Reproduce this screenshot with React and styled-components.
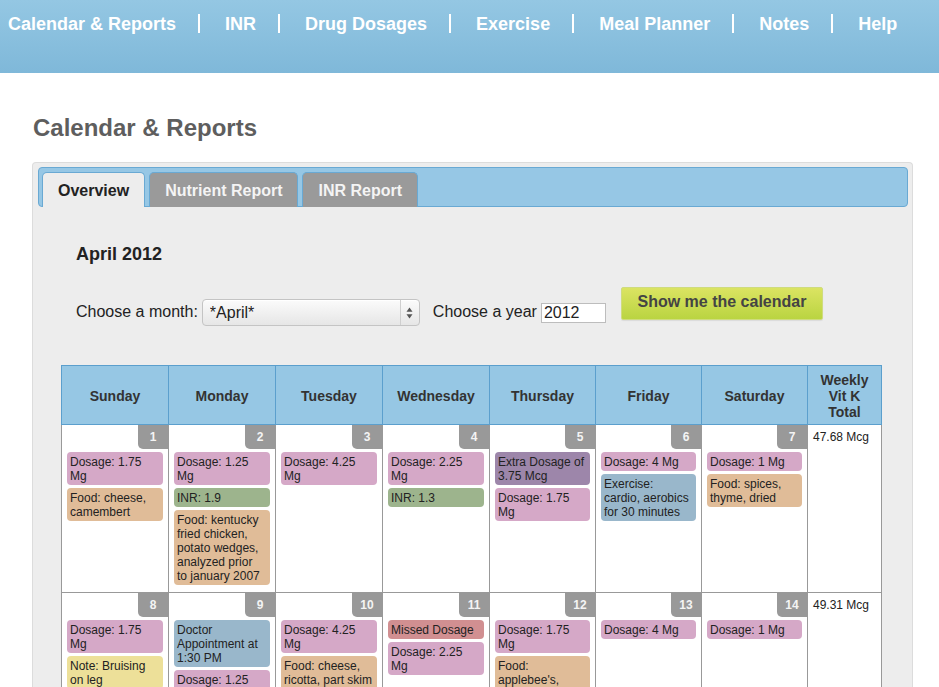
import styled, { createGlobalStyle } from "styled-components";

const GlobalStyle = createGlobalStyle`
    body {
        margin: 0;
        background: #fff;
        font-family: "Liberation Sans", Arial, Helvetica, sans-serif;
        color: #222;
    }
`

const Header = styled.header`
    height: 73px;
    background: linear-gradient(#94c7e3, #7fb8d9);
    display: flex;
    align-items: flex-start;
    padding: 14px 0 0 8px;
    box-sizing: border-box;
`
const NavLink = styled.a`
    font-size: 18px;
    line-height: 20px;
    font-weight: bold;
    color: #fff;
    text-decoration: none;
    white-space: nowrap;
`
const NavSep = styled.span`
    width: 2px;
    height: 19px;
    margin: 0 25px 0 22px;
    background: #fff;
`

const Main = styled.main`
    padding: 0 26px 0 32px;
`
const Title = styled.h1`
    margin: 41px 0 20px 1px;
    font-size: 24px;
    line-height: 28px;
    font-weight: bold;
    color: #5e5e5e;
`
const Panel = styled.div`
    width: 881px;
    box-sizing: border-box;
    background: #ededed;
    border: 1px solid #dcdcdc;
    border-bottom: none;
    border-radius: 4px 4px 0 0;
    padding: 4px 4px 0 5px;
`
const TabBar = styled.div`
    height: 40px;
    box-sizing: border-box;
    background: #96c7e5;
    border: 1px solid #69a9d3;
    border-radius: 4px;
    display: flex;
    align-items: flex-end;
    gap: 4px;
    padding: 0 3px;
`
const Tab = styled.div`
    height: 35px;
    margin-bottom: -1px;
    box-sizing: border-box;
    padding: 9px 15px 0 15px;
    font-size: 16px;
    line-height: 18px;
    font-weight: bold;
    border: 1px solid #69a9d3;
    border-bottom: none;
    border-radius: 5px 5px 0 0;
    background: ${p => (p.$active ? "#ededed" : "#9a9a9a")};
    color: ${p => (p.$active ? "#222" : "#f4f4f4")};
`
const Content = styled.div`
    padding: 36px 0 40px 23px;
`
const FormArea = styled.div`
    padding-left: 15px;
`
const Month = styled.h2`
    margin: 0 0 22px 0;
    font-size: 18px;
    line-height: 22px;
    font-weight: bold;
    color: #222;
`
const FormRow = styled.div`
    display: flex;
    align-items: flex-start;
    font-size: 16px;
    line-height: 20px;
    color: #222;
`
const Label = styled.label`
    margin-top: 15px;
    margin-right: 4px;
    white-space: nowrap;
`
const SelectBox = styled.div`
    margin-top: 12px;
    margin-right: 13px;
    width: 218px;
    height: 27px;
    box-sizing: border-box;
    display: flex;
    border: 1px solid #c4c4c4;
    border-radius: 4px;
    background: linear-gradient(#fbfbfb, #e6e6e6);
    box-shadow: inset 0 1px 0 #fff;
`
const Select = styled.select`
    flex: 1;
    appearance: none;
    border: none;
    background: transparent;
    font-family: "Liberation Sans", Arial, sans-serif;
    font-size: 16px;
    color: #222;
    padding: 0 0 0 7px;
    outline: none;
`
const Arrows = styled.div`
    width: 18px;
    border-left: 1px solid #cfcfcf;
    display: flex;
    align-items: center;
    justify-content: center;
`
const YearInput = styled.input`
    margin-top: 16px;
    width: 65px;
    height: 20px;
    box-sizing: border-box;
    border: 1px solid #bdbdbd;
    padding: 0 2px;
    font-family: "Liberation Sans", Arial, sans-serif;
    font-size: 16px;
    color: #222;
    background: #fff;
`
const ShowButton = styled.button`
    margin-left: 15px;
    width: 202px;
    height: 33px;
    padding: 0 0 3px;
    border: 1px solid #cfdc7e;
    border-radius: 2px;
    background: linear-gradient(#dbe462, #bad441);
    font-family: "Liberation Sans", Arial, sans-serif;
    font-size: 16px;
    font-weight: bold;
    color: #444;
    box-shadow: 0 1px 1px rgba(0,0,0,0.08);
`

const Table = styled.table`
    margin-top: 39px;
    width: 820px;
    table-layout: fixed;
    border-collapse: collapse;
`
const HeadCell = styled.th`
    background: #96c7e4;
    border: 1px solid #5b9fcd;
    padding: 6px 4px 4px;
    font-size: 14px;
    line-height: 16px;
    font-weight: bold;
    color: #333;
    height: 48px;
`
const DayCell = styled.td`
    border: 1px solid #999;
    background: #fff;
    padding: 0;
    vertical-align: top;
`
const TotalCell = styled.td`
    border: 1px solid #999;
    background: #fff;
    padding: 5px 5px;
    vertical-align: top;
    font-size: 12px;
    line-height: 14px;
    color: #222;
`
const BadgeRow = styled.div`
    display: flex;
    justify-content: flex-end;
`
const Badge = styled.div`
    width: 30px;
    height: 24px;
    background: #999;
    border-bottom-left-radius: 5px;
    color: #f4f4f4;
    font-size: 12px;
    font-weight: bold;
    line-height: 24px;
    text-align: center;
`
const Events = styled.div`
    display: flex;
    flex-direction: column;
    gap: 3px;
    padding: 3px 5px 7px 5px;
`
const kindColors = {
    dose: "#d5a8c7",
    food: "#e0bc98",
    inr: "#9db48d",
    extra: "#9d86aa",
    exercise: "#99b7cb",
    missed: "#d18f91",
    note: "#ede099",
}
const Event = styled.div`
    background: ${p => kindColors[p.$kind]};
    border-radius: 4px;
    padding: 3px 4.6px 2px 3px;
    font-size: 12px;
    line-height: 14px;
    color: #222;
`

const navItems = ["Calendar & Reports", "INR", "Drug Dosages", "Exercise", "Meal Planner", "Notes", "Help"]
const days = ["Sunday", "Monday", "Tuesday", "Wednesday", "Thursday", "Friday", "Saturday"]
const colWidths = [107, 107, 107, 107, 106, 106, 106, 74]

const weeks = [
    {
        total: "47.68 Mcg",
        days: [
            { n: 1, ev: [["dose", "Dosage: 1.75 Mg"], ["food", "Food: cheese, camembert"]] },
            { n: 2, ev: [["dose", "Dosage: 1.25 Mg"], ["inr", "INR: 1.9"], ["food", "Food: kentucky fried chicken, potato wedges, analyzed prior to january 2007"]] },
            { n: 3, ev: [["dose", "Dosage: 4.25 Mg"]] },
            { n: 4, ev: [["dose", "Dosage: 2.25 Mg"], ["inr", "INR: 1.3"]] },
            { n: 5, ev: [["extra", "Extra Dosage of 3.75 Mcg"], ["dose", "Dosage: 1.75 Mg"]] },
            { n: 6, ev: [["dose", "Dosage: 4 Mg"], ["exercise", "Exercise: cardio, aerobics for 30 minutes"]] },
            { n: 7, ev: [["dose", "Dosage: 1 Mg"], ["food", "Food: spices, thyme, dried"]] },
        ],
    },
    {
        total: "49.31 Mcg",
        days: [
            { n: 8, ev: [["dose", "Dosage: 1.75 Mg"], ["note", "Note: Bruising on leg"]] },
            { n: 9, ev: [["exercise", "Doctor Appointment at 1:30 PM"], ["dose", "Dosage: 1.25 Mg"]] },
            { n: 10, ev: [["dose", "Dosage: 4.25 Mg"], ["food", "Food: cheese, ricotta, part skim milk"]] },
            { n: 11, ev: [["missed", "Missed Dosage"], ["dose", "Dosage: 2.25 Mg"]] },
            { n: 12, ev: [["dose", "Dosage: 1.75 Mg"], ["food", "Food: applebee's, chicken fajitas"]] },
            { n: 13, ev: [["dose", "Dosage: 4 Mg"]] },
            { n: 14, ev: [["dose", "Dosage: 1 Mg"]] },
        ],
    },
]

export default function App() {
    return (
        <>
            <GlobalStyle />
            <Header>
                {navItems.map((item, i) => [
                    i > 0 && <NavSep key={"s" + i} />,
                    <NavLink key={item} href="#">{item}</NavLink>,
                ])}
            </Header>
            <Main>
                <Title>Calendar &amp; Reports</Title>
                <Panel>
                    <TabBar>
                        <Tab $active>Overview</Tab>
                        <Tab>Nutrient Report</Tab>
                        <Tab>INR Report</Tab>
                    </TabBar>
                    <Content>
                        <FormArea>
                            <Month>April 2012</Month>
                            <FormRow>
                                <Label>Choose a month:</Label>
                                <SelectBox>
                                    <Select defaultValue="april">
                                        <option value="april">*April*</option>
                                    </Select>
                                    <Arrows>
                                        <svg width="7" height="12" viewBox="0 0 7 12">
                                            <path d="M3.5 0.5 L6.5 4.8 L0.5 4.8 Z" fill="#555" />
                                            <path d="M3.5 11.5 L6.5 7.2 L0.5 7.2 Z" fill="#555" />
                                        </svg>
                                    </Arrows>
                                </SelectBox>
                                <Label>Choose a year</Label>
                                <YearInput defaultValue="2012" />
                                <ShowButton>Show me the calendar</ShowButton>
                            </FormRow>
                        </FormArea>
                        <Table>
                            <colgroup>
                                {colWidths.map((w, i) => <col key={i} style={{ width: w }} />)}
                            </colgroup>
                            <thead>
                                <tr>
                                    {days.map(d => <HeadCell key={d}>{d}</HeadCell>)}
                                    <HeadCell>Weekly Vit K Total</HeadCell>
                                </tr>
                            </thead>
                            <tbody>
                                {weeks.map(w => (
                                    <tr key={w.total}>
                                        {w.days.map(d => (
                                            <DayCell key={d.n}>
                                                <BadgeRow><Badge>{d.n}</Badge></BadgeRow>
                                                <Events>
                                                    {d.ev.map(([kind, text]) => (
                                                        <Event key={text} $kind={kind}>{text}</Event>
                                                    ))}
                                                </Events>
                                            </DayCell>
                                        ))}
                                        <TotalCell>{w.total}</TotalCell>
                                    </tr>
                                ))}
                            </tbody>
                        </Table>
                    </Content>
                </Panel>
            </Main>
        </>
    )
}
